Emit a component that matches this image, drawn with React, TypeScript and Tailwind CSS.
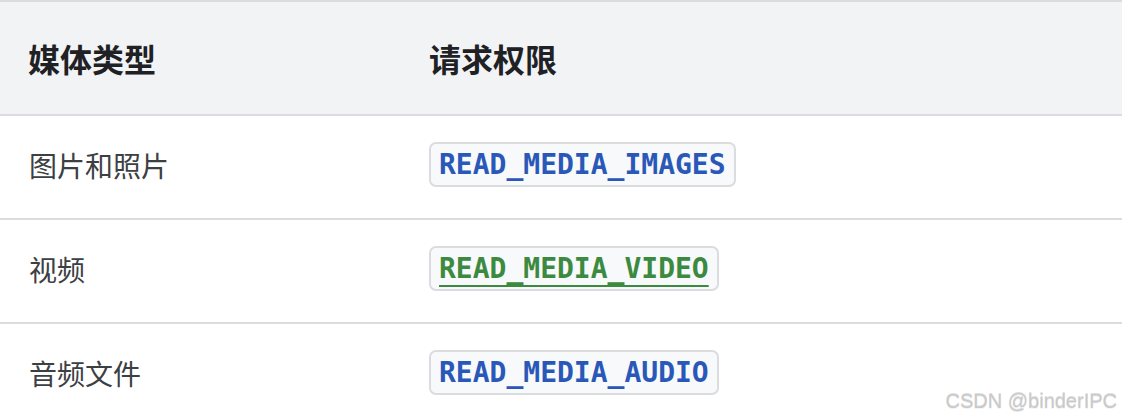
import React from "react";

const rows = [
  { type: "图片和照片", perm: "READ_MEDIA_IMAGES", green: false },
  { type: "视频", perm: "READ_MEDIA_VIDEO", green: true },
  { type: "音频文件", perm: "READ_MEDIA_AUDIO", green: false },
];

const cjk = { fontFamily: '"Noto Sans CJK SC", "Noto Sans", sans-serif' };
const mono = { fontFamily: '"DejaVu Sans Mono", "Liberation Mono", monospace' };

export default function App() {
  return (
    <div className="relative w-[1122px] h-[420px] overflow-hidden bg-white" style={cjk}>
      <div className="border-t-2 border-[#dadce0]">
        <div className="grid grid-cols-[400px_1fr] h-[114px] bg-[#f1f3f4] border-b-2 border-[#dadce0] items-center">
          <div className="pl-[28px] text-[32px] font-semibold text-[#202124] leading-none">媒体类型</div>
          <div className="pl-[29px] text-[32px] font-semibold text-[#202124] leading-none">请求权限</div>
        </div>
        {rows.map((r) => (
          <div
            key={r.perm}
            className="grid grid-cols-[400px_1fr] h-[104px] pb-[5px] border-b-2 border-[#dadce0] items-center"
          >
            <div className="pl-[29px] text-[28px] text-[#3c4043] leading-none">{r.type}</div>
            <div className="pl-[29px] flex">
              <span
                className={
                  "inline-block h-[45px] px-[8px] rounded-[7px] border-2 border-[#dadce0] bg-[#f8f9fa] text-[28px] font-bold leading-[41px] " +
                  (r.green ? "text-[#3b8a3f] underline decoration-[2px] underline-offset-[7px]" : "text-[#2a58b8]")
                }
                style={mono}
              >
                {r.perm}
              </span>
            </div>
          </div>
        ))}
      </div>
      <div
        className="absolute right-[5px] bottom-[9px] text-[20px] text-[#c9c9c9] leading-none"
        style={{ fontFamily: '"Liberation Sans", Arial, sans-serif', textShadow: "0 1px 0 #f4f4f4, 0 -1px 0 #e0e0e0" }}
      >
        CSDN @binderIPC
      </div>
    </div>
  );
}
